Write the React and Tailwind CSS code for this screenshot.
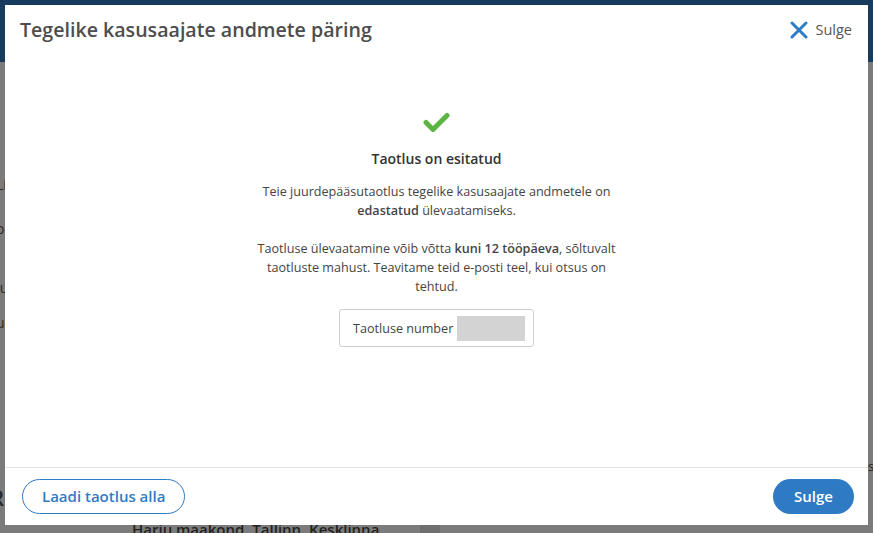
import { useState } from 'react';

function CheckIcon() {
  return (
    <svg width="27" height="20" viewBox="0 0 27 20" fill="none">
      <path d="M3 10.5l7 7L24 3.5" stroke="#5cb443" strokeWidth="5" strokeLinecap="round" strokeLinejoin="round" />
    </svg>
  );
}

function CloseIcon() {
  return (
    <svg width="18" height="18" viewBox="0 0 18 18" fill="none">
      <path d="M2 2l14 14M16 2L2 16" stroke="#2f7bc4" strokeWidth="3" strokeLinecap="round" />
    </svg>
  );
}

export default function App() {
  const [open] = useState(true);

  return (
    <div className="relative w-[873px] h-[533px] overflow-hidden bg-[#7b7b7b] font-['Open_Sans',sans-serif]">
      {/* page behind the dimmed overlay */}
      <div className="h-[62px] bg-[#173b5d]" />
      <div className="flex flex-col text-[14px] text-[#2a2a2a]">
        <span className="mt-[112px] -ml-[4px]">Lin</span>
        <span className="mt-[23px] -ml-[4px]">ok</span>
        <span className="mt-[38px] -ml-[4px]">Ju</span>
        <span className="mt-[14px] -ml-[4px]">us</span>
        <span className="mt-[148px] -ml-[10px] text-[22px] font-semibold">Re</span>
      </div>
      <div className="absolute left-[132px] top-[518px] text-[15px] font-semibold text-[#222]">Harju maakond, Tallinn, Kesklinna</div>
      <div className="absolute left-[420px] top-[520px] w-[20px] h-[14px] bg-[#6f6f6f]" />
      <div className="absolute left-[868px] top-[457px] text-[13px] text-[#222]">s</div>

      {open && (
        <div className="absolute left-[5px] top-[5px] w-[863px] h-[520px] bg-white flex flex-col">
          <div className="h-[50px] flex items-center justify-between pl-[15px] pr-[16px]">
            <h1 className="text-[19.6px] font-semibold text-[#4d4d4d]">Tegelike kasusaajate andmete päring</h1>
            <button className="flex items-center gap-[7px] text-[14.5px] text-[#555]">
              <CloseIcon />
              Sulge
            </button>
          </div>

          <div className="flex-1 flex flex-col items-center pt-[57px] text-[#444] text-[12.6px] leading-[19px] text-center">
            <CheckIcon />
            <div className="mt-[17px] text-[14px] font-semibold text-[#333]">Taotlus on esitatud</div>
            <p className="mt-[14px]">
              Teie juurdepääsutaotlus tegelike kasusaajate andmetele on
              <br />
              <b className="font-semibold">edastatud</b> ülevaatamiseks.
            </p>
            <p className="mt-[19px] w-[370px]">
              Taotluse ülevaatamine võib võtta <b className="font-semibold">kuni 12 tööpäeva</b>, sõltuvalt taotluste mahust. Teavitame teid e-posti teel, kui otsus on tehtud.
            </p>
            <div className="mt-[13px] w-[195px] h-[38px] border border-[#cfcfcf] rounded-[3px] flex items-center pl-[13px] gap-[4px]">
              <span>Taotluse number</span>
              <span className="w-[68px] h-[25px] bg-[#d3d3d3]" />
            </div>
          </div>

          <div className="h-[58px] border-t border-[#e2e2e2] flex items-center justify-between pl-[17px] pr-[14px]">
            <button className="h-[35px] px-[19px] rounded-full border border-[#2f7bc4] text-[#2f7bc4] text-[15px] font-semibold">
              Laadi taotlus alla
            </button>
            <button className="h-[35px] w-[81px] rounded-full bg-[#2e7bc4] text-white text-[15px] font-semibold">
              Sulge
            </button>
          </div>
        </div>
      )}
    </div>
  );
}
